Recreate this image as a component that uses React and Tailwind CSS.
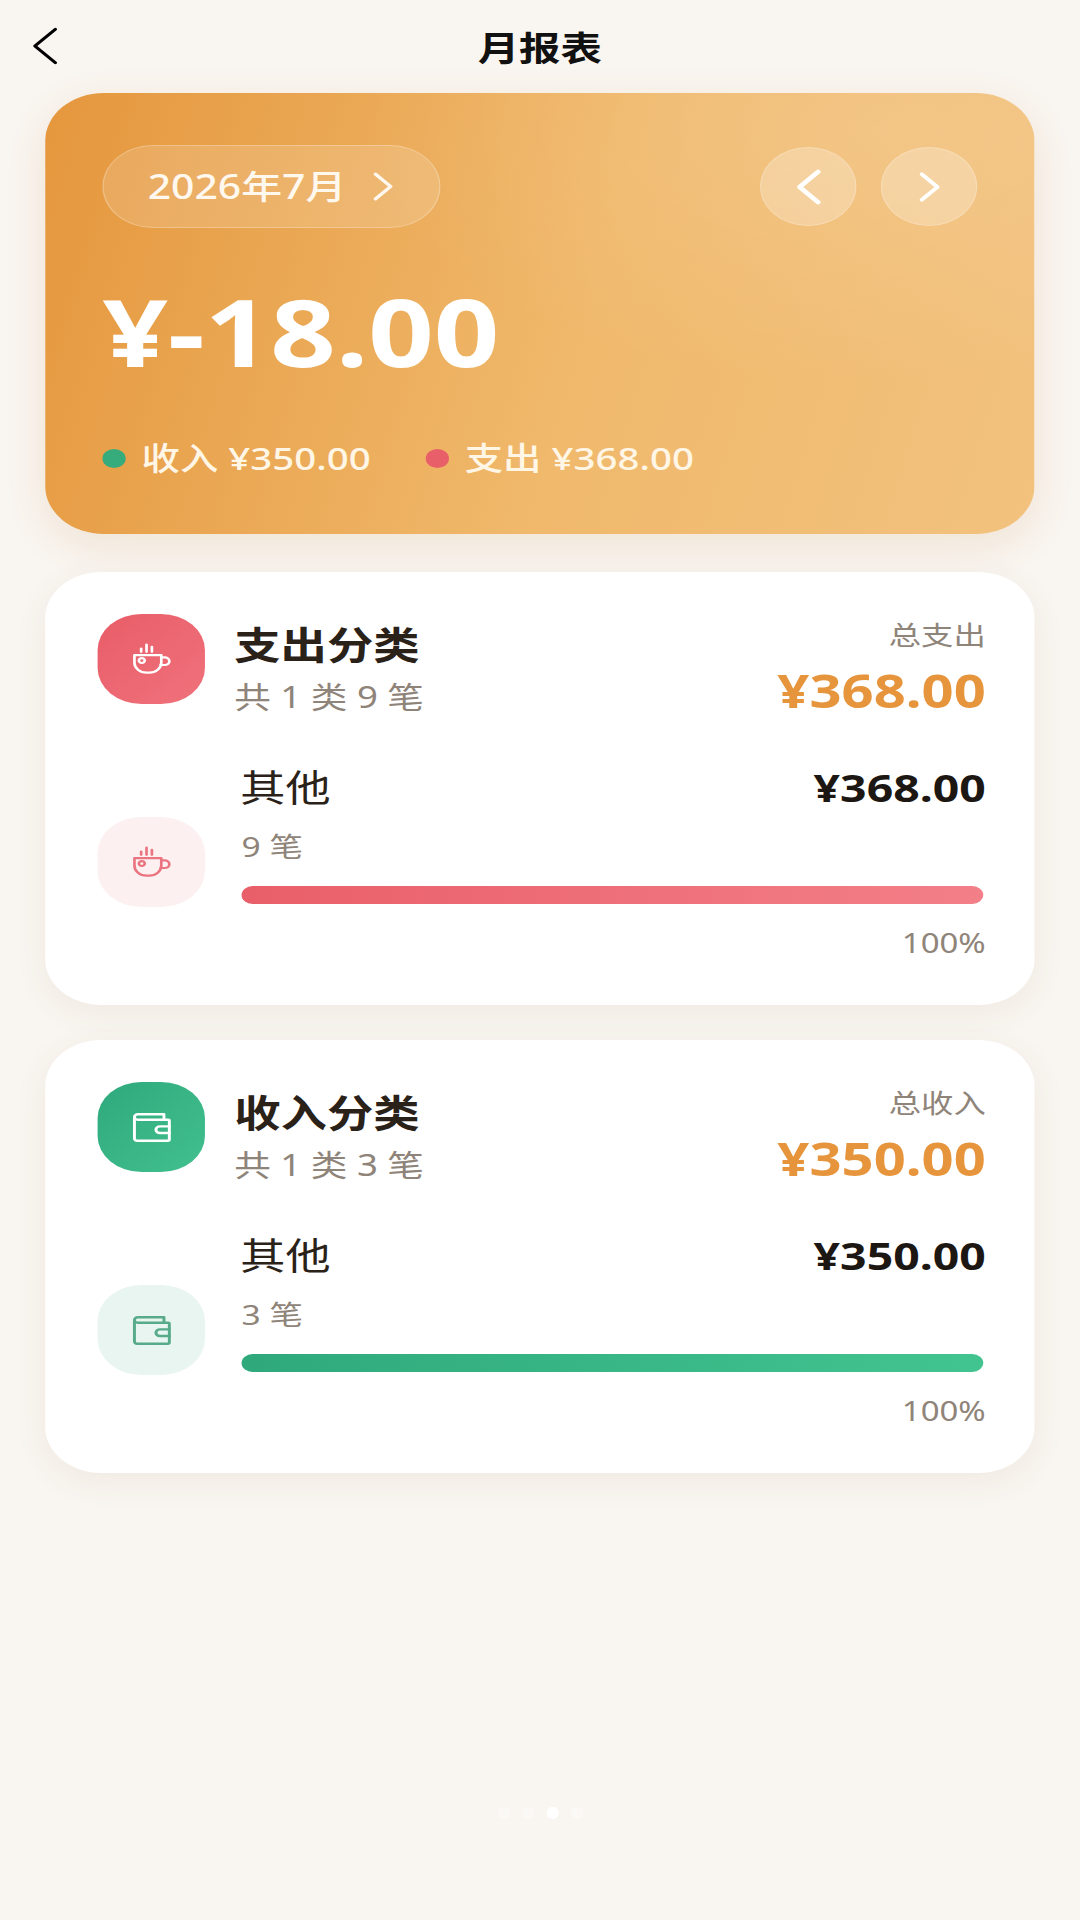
import React from 'react';

const FONT = 'font-["Noto_Sans","Noto_Sans_CJK_SC",sans-serif]';

const Chevron = ({ dir = 'right', className = '', sw = 2 }) => (
  <svg viewBox="0 0 12 20" fill="none" stroke="currentColor" strokeWidth={sw} strokeLinecap="round" strokeLinejoin="round" className={className}>
    <path d={dir === 'right' ? 'M2 2l8 8-8 8' : 'M10 2l-8 8 8 8'} />
  </svg>
);

const CupIcon = ({ className = '' }) => (
  <svg viewBox="0 0 30 30" fill="none" stroke="currentColor" strokeWidth="2" strokeLinecap="round" strokeLinejoin="round" className={className}>
    <path d="M2 11h20v7a9 9 0 0 1-9 9h-2a9 9 0 0 1-9-9z" />
    <path d="M22 13h2.500a3.500 3.500 0 0 1 0 7H21.500" />
    <path d="M7 8V5M11 8V1.500M15 8V3.500" />
    <circle cx="7.500" cy="16" r="2.200" />
  </svg>
);

const WalletIcon = ({ className = '' }) => (
  <svg viewBox="0 0 30 30" fill="none" stroke="currentColor" strokeWidth="2.200" strokeLinecap="round" strokeLinejoin="round" className={className}>
    <path d="M2 6.500V25a2 2 0 0 0 2 2h23a1 1 0 0 0 1-1V9a1 1 0 0 0-1-1H4.500A2.500 2.500 0 0 1 2 5.500 2.500 2.500 0 0 1 4.500 3H24v5" />
    <path d="M28 14h-7a3 3 0 0 0 0 6h7" />
  </svg>
);

const Section = ({ title, sub, totalLabel, total, count, amount, Icon, iconBg, softBg, softText, barClass, className = '' }) => (
  <section className={`mx-[37px] h-[433px] rounded-[46px] bg-white pt-[42px] pr-[40px] pl-[43px] shadow-[0_8px_30px_rgba(120,90,50,0.07)] ${className}`}>
    <div className="flex justify-between">
      <div className="flex">
        <div className={`flex h-[90px] w-[88px] items-center justify-center rounded-[36px] text-white ${iconBg}`}>
          <Icon className="h-[33px] w-[33px]" />
        </div>
        <div className="ml-[24px]">
          <h2 className="mt-[6px] text-[38px] leading-[48px] font-bold text-[#2a2118]">{title}</h2>
          <p className="mt-[11px] text-[30px] leading-[36px] text-[#8f8479]">{sub}</p>
        </div>
      </div>
      <div className="text-right">
        <p className="mt-[4px] text-[26.500px] leading-[34px] text-[#8f8479]">{totalLabel}</p>
        <p className="mt-[9px] mb-[2px] text-[46px] leading-[58px] font-bold text-[#e6953c]">{total}</p>
      </div>
    </div>
    <div className="mt-[43px] flex items-start">
      <div className={`mt-[53px] flex h-[90px] w-[88px] shrink-0 items-center justify-center rounded-[36px] ${softBg} ${softText}`}>
        <Icon className="h-[33px] w-[33px]" />
      </div>
      <div className="ml-[30px] flex-1">
        <div className="flex items-center justify-between">
          <span className="-ml-[1px] text-[37px] leading-[48px] text-[#2a2118]">其他</span>
          <span className="-mt-[3px] text-[38px] leading-[48px] font-bold text-[#1c1712]">{amount}</span>
        </div>
        <p className="mt-[17px] text-[27.500px] leading-[36px] text-[#8f8479]">{count}</p>
        <div className={`mt-[21px] mr-[2px] h-[18px] rounded-full ${barClass}`} />
        <p className="mt-[21px] text-right text-[27px] leading-[36px] text-[#8f8479]">100%</p>
      </div>
    </div>
  </section>
);

const App = () => (
  <div className="h-[1920px] w-[1080px] overflow-hidden bg-[#f9f5f0]">
    <div className={`relative h-[1920px] w-[885px] origin-top-left scale-x-[1.22] ${FONT}`}>
      <header className="relative flex h-[93px] items-center justify-center pt-[3px]">
        <Chevron dir="left" sw={1.3} className="absolute top-[25px] left-[24px] h-[42px] w-[26px] text-black" />
        <h1 className="text-[34px] font-bold text-[#111]">月报表</h1>
      </header>

      <section className="mx-[37px] h-[441px] rounded-[48px] bg-[radial-gradient(ellipse_at_85%_8%,rgba(255,255,255,0.13),transparent_45%),linear-gradient(104deg,#e5973d_0%,#f0b96c_55%,#f2c27e_100%)] px-[47px] pt-[52px] shadow-[0_12px_36px_rgba(190,130,60,0.14)]">
        <div className="flex items-center justify-between">
          <div className="flex h-[83px] w-[277px] items-center justify-center gap-[20px] rounded-full border border-white/25 bg-white/15 text-[#fff8ee]">
            <span className="text-[33.500px] font-medium">2026年7月</span>
            <Chevron className="h-[31px] w-[20px]" sw={2} />
          </div>
          <div className="flex gap-[20px]">
            <div className="flex h-[79px] w-[79px] items-center justify-center rounded-full border border-white/20 bg-white/25 text-white">
              <Chevron dir="left" className="h-[38px] w-[24px]" sw={2.200} />
            </div>
            <div className="flex h-[79px] w-[79px] items-center justify-center rounded-full border border-white/20 bg-white/25 text-white">
              <Chevron className="h-[32px] w-[22px]" sw={2.200} />
            </div>
          </div>
        </div>
        <p className="mt-[43px] text-[94px] leading-[120px] font-bold text-white">¥-18.00</p>
        <div className="mt-[45px] flex gap-[45px] text-[31.500px] leading-[44px] font-medium text-[#fff6e6]">
          <div className="flex items-center gap-[13px]">
            <span className="h-[19px] w-[19px] rounded-full bg-[#36ab7c]" />
            <span>收入 ¥350.00</span>
          </div>
          <div className="flex items-center gap-[13px]">
            <span className="h-[19px] w-[19px] rounded-full bg-[#e95f69]" />
            <span>支出 ¥368.00</span>
          </div>
        </div>
      </section>

      <Section
        className="mt-[38px]"
        title="支出分类"
        sub="共 1 类 9 笔"
        totalLabel="总支出"
        total="¥368.00"
        count="9 笔"
        amount="¥368.00"
        Icon={CupIcon}
        iconBg="bg-[linear-gradient(135deg,#e85d68,#f0727c)]"
        softBg="bg-[#fdf0f1]"
        softText="text-[#ea7580]"
        barClass="bg-[linear-gradient(90deg,#e95f69,#f37f88)]"
      />
      <Section
        className="mt-[35px]"
        title="收入分类"
        sub="共 1 类 3 笔"
        totalLabel="总收入"
        total="¥350.00"
        count="3 笔"
        amount="¥350.00"
        Icon={WalletIcon}
        iconBg="bg-[linear-gradient(135deg,#2fa97c,#42c08f)]"
        softBg="bg-[#e8f5f0]"
        softText="text-[#57ab8b]"
        barClass="bg-[linear-gradient(90deg,#2fa97c,#42c490)]"
      />

      <div className="absolute top-[1807px] left-[408px] flex gap-[10px]">
        <span className="h-[12px] w-[10px] rounded-full bg-white/40" />
        <span className="h-[12px] w-[10px] rounded-full bg-white/40" />
        <span className="h-[12px] w-[10px] rounded-full bg-white" />
        <span className="h-[12px] w-[10px] rounded-full bg-white/40" />
      </div>
    </div>
  </div>
);

export default App;
